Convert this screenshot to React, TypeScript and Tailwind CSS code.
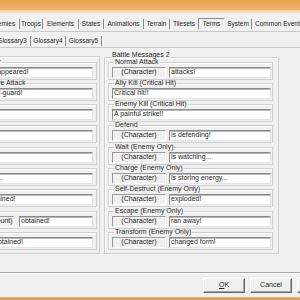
type Msg = { label: string; box?: string; text: string };

const leftMsgs: Msg[] = [
  { label: 'Encounter', text: 'Enemies appeared!' },
  { label: 'Preemptive Attack', text: 'Caught off-guard!' },
  { label: 'Escaped', text: 'Got away!' },
  { label: 'Failed', text: "Can't flee!" },
  { label: 'Victory', text: 'Victory!' },
  { label: 'Defeat', text: 'Defeated...' },
  { label: 'EXP', text: 'Heroes gained!' },
  { label: 'Gold', box: '(Gold Amount)', text: 'obtained!' },
  { label: 'Item', text: 'Reward obtained!' },
];

const rightMsgs: Msg[] = [
  { label: 'Normal Attack', box: '(Character)', text: 'attacks!' },
  { label: 'Ally Kill (Critical Hit)', text: 'Critical hit!!' },
  { label: 'Enemy Kill (Critical Hit)', text: 'A painful strike!!' },
  { label: 'Defend', box: '(Character)', text: 'is defending!' },
  { label: 'Wait (Enemy Only)', box: '(Character)', text: 'is watching...' },
  { label: 'Charge (Enemy Only)', box: '(Character)', text: 'is storing energy...' },
  { label: 'Self-Destruct (Enemy Only)', box: '(Character)', text: 'exploded!' },
  { label: 'Escape (Enemy Only)', box: '(Character)', text: 'ran away!' },
  { label: 'Transform (Enemy Only)', box: '(Character)', text: 'changed form!' },
];

const tabs1 = [
  { name: 'Enemies', w: 'w-[33px]' },
  { name: 'Troops', w: 'w-[22px]' },
  { name: 'Elements', w: 'w-[35px]' },
  { name: 'States', w: 'w-[24px]' },
  { name: 'Animations', w: 'w-[39px]' },
  { name: 'Terrain', w: 'w-[25px]' },
];

const tabs2 = [
  { name: 'Glossary3', w: 'w-[36px]' },
  { name: 'Glossary4', w: 'w-[34px]' },
  { name: 'Glossary5', w: 'w-[35px]' },
];

function Sep() {
  return <div className="w-[1px] h-[10px] bg-[#8c8c8c] shrink-0" />;
}

function MsgBox({ msg, boxW, gap, extra, pr }: { msg: Msg; boxW: string; gap: string; extra: boolean; pr: string }) {
  return (
    <fieldset
      className={`border border-[#cfcfcf] shadow-[inset_1px_1px_0_#fff] pt-[2px] pb-[1px] pl-[3px] ${pr} min-w-0 ${extra ? 'mt-[1px]' : ''}`}
    >
      <legend className="ml-[2px] px-[1px] leading-[6px] whitespace-nowrap">{msg.label}</legend>
      <div className={`flex h-[11px] ${gap}`}>
        {msg.box && (
          <div
            className={`${boxW} shrink-0 flex items-center justify-center whitespace-nowrap border border-t-[#9a9a9a] border-l-[#9a9a9a] border-r-white border-b-white`}
          >
            {msg.box}
          </div>
        )}
        <div className="flex-1 min-w-0 flex items-center whitespace-nowrap bg-white pl-[1px] border border-t-[#8a8a8a] border-l-[#8a8a8a] border-r-[#e4e4e4] border-b-[#e4e4e4] shadow-[inset_0_1px_0_#b8b8b8]">
          {msg.text}
        </div>
      </div>
    </fieldset>
  );
}

export default function App() {
  return (
    <div className="w-[300px] h-[300px] overflow-hidden bg-[#f0f0f0] flex flex-col font-['Liberation_Sans',Arial,sans-serif] text-[7px] text-[#262626]">
      {/* window title, bottom edge only */}
      <div className="h-[10px] shrink-0 bg-linear-to-b from-[#e7a24a] to-[#eeb46a]" />
      <div className="h-[4px] shrink-0 bg-linear-to-b from-[#f3cf9c] to-[#f2ece4]" />
      <div className="h-[2px] shrink-0" />

      {/* tab rows */}
      <div className="h-[16px] shrink-0 flex items-center border-b border-[#c9c9c9] ml-[-14px] text-[6.5px]">
        {tabs1.map(t => (
          <div key={t.name} className="flex items-center shrink-0">
            <div className={`${t.w} text-center whitespace-nowrap`}>{t.name}</div>
            <Sep />
          </div>
        ))}
        <div className="w-[28px] shrink-0 text-center">Tilesets</div>
        <div className="w-[27px] h-[12px] shrink-0 flex items-center justify-center border border-t-[#8c8c8c] border-l-[#8c8c8c] border-r-white border-b-white">
          Terms
        </div>
        <div className="w-[26px] shrink-0 text-center">System</div>
        <Sep />
        <div className="w-[70px] shrink-0 pl-[3px] whitespace-nowrap">Common Events</div>
      </div>
      <div className="h-[16px] shrink-0 pt-[3px] flex items-center border-b border-[#c9c9c9] ml-[-6px] text-[6.5px]">
        {tabs2.map(t => (
          <div key={t.name} className="flex items-center shrink-0">
            <div className={`${t.w} text-center whitespace-nowrap`}>{t.name}</div>
            <Sep />
          </div>
        ))}
      </div>

      {/* tab page */}
      <div className="h-[225px] shrink-0 border-b border-[#a8a8a8] shadow-[0_1px_0_#fff] pt-[5px]">
        <div className="flex items-start">
          <fieldset className="w-[142px] ml-[-42px] mt-[3px] shrink-0 border border-[#cfcfcf] shadow-[inset_1px_1px_0_#fff] pt-[2px] pb-[3px] pl-[3px] pr-[2px] min-w-0 flex flex-col">
            {leftMsgs.map((m, i) => (
              <MsgBox key={m.label} msg={m} boxW="w-[48px]" gap="gap-[5px]" extra={i === 4 || i === 7} pr="pr-[3px]" />
            ))}
          </fieldset>
          <fieldset className="w-[175px] ml-[4px] shrink-0 border border-[#cfcfcf] shadow-[inset_1px_1px_0_#fff] pb-[3px] pl-[3px] pr-[5px] min-w-0">
            <legend className="ml-[3px] px-[1px] leading-[4px] pb-[4px] whitespace-nowrap">Battle Messages 2</legend>
            <div className="flex flex-col -mt-[2px]">
              {rightMsgs.map((m, i) => (
                <MsgBox key={m.label} msg={m} boxW="w-[54px]" gap="gap-[3px]" extra={i === 4 || i === 7} pr="pr-[1px]" />
              ))}
            </div>
          </fieldset>
        </div>
      </div>

      {/* dialog buttons */}
      <div className="mt-[5px] h-[15px] shrink-0 flex gap-[5px] pl-[203px]">
        <button className="w-[42px] shrink-0 border border-t-white border-l-white border-r-[#6a6a6a] border-b-[#6a6a6a] shadow-[inset_-1px_-1px_0_#a3a3a3]">
          <span className="underline">O</span>K
        </button>
        <button className="w-[42px] shrink-0 border border-t-white border-l-white border-r-[#6a6a6a] border-b-[#6a6a6a] shadow-[inset_-1px_-1px_0_#a3a3a3]">
          Cancel
        </button>
        <button className="w-[42px] shrink-0 border border-t-white border-l-white border-r-[#6a6a6a] border-b-[#6a6a6a] shadow-[inset_-1px_-1px_0_#a3a3a3]">
          <span className="underline">A</span>pply
        </button>
      </div>

      <div className="mt-auto h-[3px] shrink-0 bg-linear-to-b from-[#e2b27a] to-[#d9974c]" />
    </div>
  );
}
